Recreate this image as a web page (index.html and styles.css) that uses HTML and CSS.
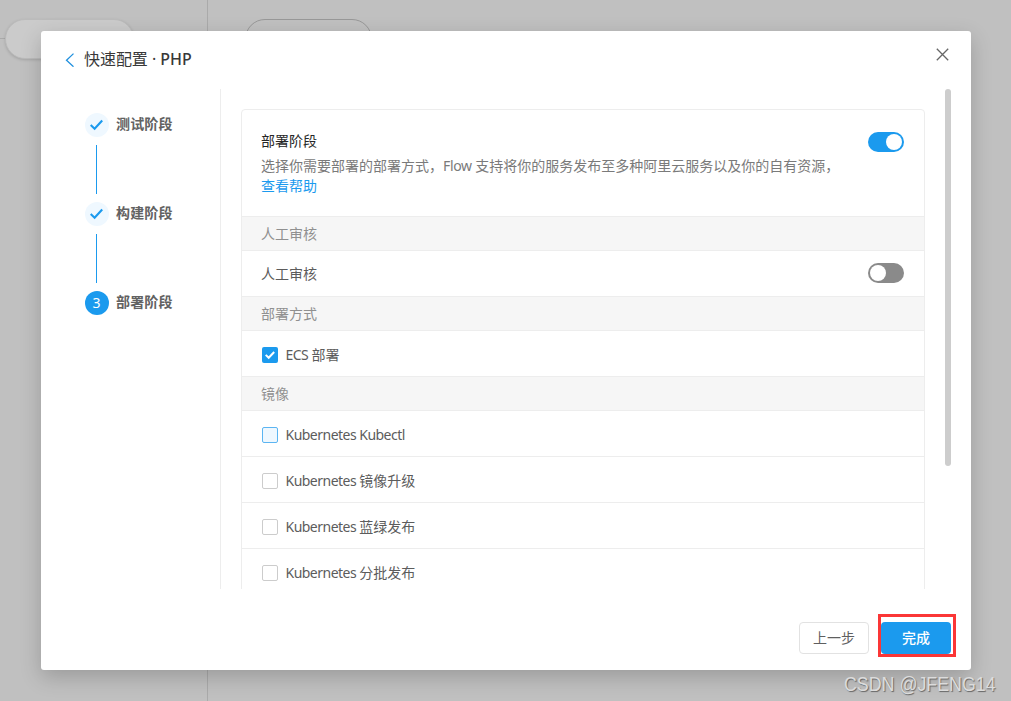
FILE: index.html
```html
<!DOCTYPE html>
<html lang="zh-CN">
<head>
<meta charset="utf-8">
<title>快速配置</title>
<link rel="stylesheet" href="styles.css">
</head>
<body>
<div class="canvas">
  <div class="lane-divider"></div>
  <div class="connector"></div>
  <div class="node node-solid"></div>
  <div class="node node-outline"></div>
</div>
<main class="modal">
  <header class="modal-header">
    <svg class="back" width="10" height="14" viewBox="0 0 10 14"><path d="M8.5 .6 1.5 7.2l7 6.5"/></svg>
    <h1 class="title"><span>快速配置</span> · <span class="lang">PHP</span></h1>
    <svg class="close" width="13" height="13" viewBox="0 0 13 13"><path d="M.8.8l11.4 11.4M12.2.8.8 12.2"/></svg>
  </header>
  <div class="modal-body">
    <nav class="steps">
      <div class="step">
        <span class="dot"><svg width="14" height="12" viewBox="0 0 14 12"><path d="M.7 6 4.6 9.8 12.2 1.5"/></svg></span>
        <span class="step-name">测试阶段</span>
      </div>
      <div class="step-line"></div>
      <div class="step">
        <span class="dot"><svg width="14" height="12" viewBox="0 0 14 12"><path d="M.7 6 4.6 9.8 12.2 1.5"/></svg></span>
        <span class="step-name">构建阶段</span>
      </div>
      <div class="step-line"></div>
      <div class="step">
        <span class="dot current">3</span>
        <span class="step-name">部署阶段</span>
      </div>
    </nav>
    <section class="scroller">
      <div class="panel">
        <div class="intro">
          <div class="intro-text">
            <h2 class="intro-title">部署阶段</h2>
            <p class="intro-desc">选择你需要部署的部署方式，<span class="flow">Flow</span> 支持将你的服务发布至多种阿里云服务以及你的自有资源，<br><a class="help">查看帮助</a></p>
          </div>
          <span class="switch on"></span>
        </div>
        <div class="band">人工审核</div>
        <div class="row spread"><span>人工审核</span><span class="switch"></span></div>
        <div class="band">部署方式</div>
        <div class="row"><span class="box checked"><svg width="12" height="10" viewBox="0 0 12 10"><path d="M1.7 4.9 4.7 7.8 10.2 2"/></svg></span><span class="label"><span class="latin">ECS </span>部署</span></div>
        <div class="band">镜像</div>
        <div class="row"><span class="box hover"></span><span class="label"><span class="latin">Kubernetes Kubectl</span></span></div>
        <div class="row ruled"><span class="box"></span><span class="label"><span class="latin">Kubernetes </span>镜像升级</span></div>
        <div class="row ruled"><span class="box"></span><span class="label"><span class="latin">Kubernetes </span>蓝绿发布</span></div>
        <div class="row ruled"><span class="box"></span><span class="label"><span class="latin">Kubernetes </span>分批发布</span></div>
      </div>
      <div class="scrollbar"></div>
    </section>
  </div>
  <footer class="modal-footer">
    <button class="btn">上一步</button>
    <span class="highlight"><button class="btn primary">完成</button></span>
  </footer>
</main>
<div class="watermark">CSDN @JFENG14</div>
</body>
</html>
```

FILE: styles.css
```css
* { box-sizing: border-box; }

body {
  margin: 0;
  width: 1011px;
  height: 701px;
  overflow: hidden;
  position: relative;
  padding: 31px 40px 31px 41px;
  background: #c0c0c0;
  color: #5c5c5c;
  font: 14px/20px "Noto Sans", "Noto Sans CJK SC", sans-serif;
}

h1, h2, p { margin: 0; font-weight: 400; }

.canvas { position: absolute; inset: 0; }
.lane-divider { position: absolute; left: 207px; top: 0; width: 1px; height: 100%; background: #aaa; }
.connector { position: absolute; left: 0; top: 38px; width: 6px; height: 1px; background: #aaa; }
.node { position: absolute; height: 40px; border-radius: 20px; }
.node-solid { left: 5px; top: 19px; width: 129px; background: #cbcbcb; border: 1px solid #bbb; box-shadow: 0 1px 3px rgba(0, 0, 0, .15); }
.node-outline { left: 245px; top: 19px; width: 127px; border: 1px solid #989898; }

.modal {
  position: relative;
  display: flex;
  flex-direction: column;
  width: 930px;
  height: 639px;
  border-radius: 3px;
  background: #fff;
  box-shadow: 0 7px 21px rgba(0, 0, 0, .2);
}

.modal-header { display: flex; height: 58px; padding: 17px 22px 0 24px; }
.modal-header svg { fill: none; }
.back { margin-top: 5px; stroke: #2090de; stroke-width: 1.3; }
.title { flex: 1; margin: -1px 0 0 9px; font-size: 16px; line-height: 24px; color: #383838; letter-spacing: -.05px; }
.lang { font-weight: 500; }
.close { stroke: #666; stroke-width: 1.3; }

.modal-body { display: flex; height: 500px; }

.steps { width: 180px; padding: 24px 0 0 44px; border-right: 1px solid #ededed; }
.step { display: flex; align-items: center; gap: 7px; height: 24px; }
.step-name { font-weight: 700; margin-top: -2px; color: #626262; letter-spacing: .15px; }
.step-line { width: 1px; height: 49px; margin: 8px 0 8px 11px; background: #1b9aee; }
.dot { display: flex; align-items: center; justify-content: center; width: 24px; height: 24px; border-radius: 50%; background: #eff8ff; }
.dot svg { fill: none; stroke: #1b9aee; stroke-width: 2.1; }
.dot.current { background: #1b9aee; color: #fff; padding-right: 1px; }

.scroller { flex: 1; display: flex; padding: 20px 20px 0; overflow: hidden; }
.panel { width: 684px; height: 520px; border: 1px solid #ededed; border-radius: 4px; overflow: hidden; flex: none; }
.scrollbar { width: 6px; height: 377px; margin: -20px 0 0 20px; border-radius: 3px; background: #cdcdcd; flex: none; }

.intro { display: flex; justify-content: space-between; height: 106px; padding: 22px 20px 0 19px; }
.intro-title { font-size: 14px; line-height: 20px; color: #262626; margin-top: -1px; }
.intro-desc { margin-top: 5px; color: #7a7a7a; white-space: nowrap; }
.flow { letter-spacing: -.35px; }
.help { color: #1b9aee; }

.switch { width: 36px; height: 20px; padding: 2px; border-radius: 10px; background: #8a8a8a; flex: none; }
.switch::before { content: ""; display: block; width: 16px; height: 16px; border-radius: 50%; background: #fff; }
.switch.on { background: #1b9aee; }
.switch.on::before { margin-left: auto; }

.band { height: 35px; padding: 7px 19px; border: solid #ededed; border-width: 1px 0; background: #f6f6f6; color: #909090; }
.row { display: flex; align-items: center; height: 45px; padding: 0 20px; }
.row.ruled { height: 46px; border-top: 1px solid #ededed; }
.row.spread { justify-content: space-between; padding-left: 19px; }
.row.spread .switch { margin-top: -2px; }
.label { margin: 2px 0 0 7.5px; white-space: nowrap; }
.latin { letter-spacing: -.52px; }
.box { display: flex; align-items: center; justify-content: center; width: 16px; height: 16px; margin-top: 2px; border: 1px solid #ccc; border-radius: 2px; }
.box.checked { border: 0; background: #1b9aee; }
.box.checked svg { fill: none; stroke: #fff; stroke-width: 2; }
.box.hover { border-color: #5bb5f2; background: #eff8ff; }

.modal-footer { display: flex; justify-content: flex-end; align-items: flex-start; gap: 9px; padding: 25px 15px 0 0; }
.btn { width: 70px; height: 32px; padding: 0; margin-top: 8px; border: 1px solid #e2e2e2; border-radius: 4px; background: #fff; color: #5f5f5f; font: inherit; }
.highlight { width: 78px; height: 43px; border: 3px solid #fb3636; }
.btn.primary { display: block; margin-top: 5px; border: 0; background: #1b9aee; color: #fff; font-weight: 500; }

.watermark {
  position: absolute;
  left: 844px;
  top: 672px;
  font: 20px/24px "Liberation Sans", Arial, sans-serif;
  color: #dcdcdc;
  text-shadow: 1px 1px 1px #666;
  white-space: nowrap;
  transform: scaleX(.89);
  transform-origin: 0 0;
}
```
